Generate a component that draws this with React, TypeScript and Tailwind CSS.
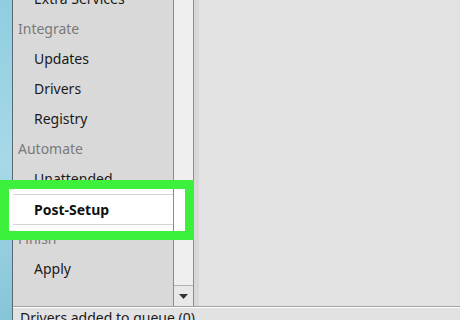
import React from 'react';

const font = { fontFamily: '"Noto Sans", "Open Sans", sans-serif' };

const App = () => {
  const rows = [
    { label: 'Extra Services', kind: 'item' },
    { label: 'Integrate', kind: 'head' },
    { label: 'Updates', kind: 'item' },
    { label: 'Drivers', kind: 'item' },
    { label: 'Registry', kind: 'item' },
    { label: 'Automate', kind: 'head' },
    { label: 'Unattended', kind: 'item' },
    { label: 'Post-Setup', kind: 'selected' },
    { label: 'Finish', kind: 'head' },
    { label: 'Apply', kind: 'item' },
  ];

  return (
    <div className="relative w-[460px] h-[320px] overflow-hidden flex bg-[#e3e3e3]" style={font}>
      {/* desktop strip */}
      <div className="w-[12px] h-full bg-gradient-to-b from-[#8fcde0] via-[#a6d9e8] to-[#86c4d8]" />
      <div className="w-px h-full bg-[#5a6a70]" />

      <div className="flex-1 flex flex-col">
        <div className="flex flex-1 min-h-0">
          {/* sidebar */}
          <div className="w-[160px] bg-[#d9d9d9] flex flex-col mt-[-17px] text-[14px]">
            {rows.map((r) =>
              r.kind === 'selected' ? (
                <div key={r.label} className="h-[30px]" />
              ) : (
                <div
                  key={r.label}
                  className={
                    r.kind === 'head'
                      ? 'h-[30px] flex items-center pl-[5px] text-[#7a7a7a]'
                      : 'h-[30px] flex items-center pl-[21px] text-[#1a1a1a]'
                  }
                >
                  {r.label}
                </div>
              )
            )}
          </div>

          {/* scrollbar */}
          <div className="w-[21px] flex flex-col border-x border-[#8c8c8c] bg-[#efefef]">
            <div className="flex-1 border-b border-[#b0b0b0]" />
            <div className="h-[20px] flex items-center justify-center bg-[#e8e8e8]">
              <svg width="9" height="5" viewBox="0 0 9 5">
                <path d="M0 0 H9 L4.5 5 Z" fill="#333" />
              </svg>
            </div>
          </div>
          <div className="w-[5px] bg-[#d8d8d8]" />
          <div className="flex-1 bg-[#e3e3e3]" />
        </div>

        {/* status bar */}
        <div className="h-[14px] border-t border-[#a3a3a3] shadow-[inset_0_1px_0_#ffffff] bg-[#e2e2e2] pl-[7px] text-[14px] text-[#1a1a1a] leading-[22px] overflow-hidden">
          Drivers added to queue (0)
        </div>
      </div>

      {/* highlight frame */}
      <div className="absolute left-0 top-[180px] w-[194px] h-[60px] border-[9px] border-[#3cf03c] bg-white">
        <div className="absolute left-[4px] top-[5px] w-[160px] h-[31px] border-y border-[#d4d4d4] flex items-center pl-[21px] text-[14px] font-bold text-[#111]">
          Post-Setup
        </div>
        <div className="absolute left-[164px] top-0 bottom-0 w-px bg-[#8c8c8c]" />
      </div>
    </div>
  );
};

export default App;
